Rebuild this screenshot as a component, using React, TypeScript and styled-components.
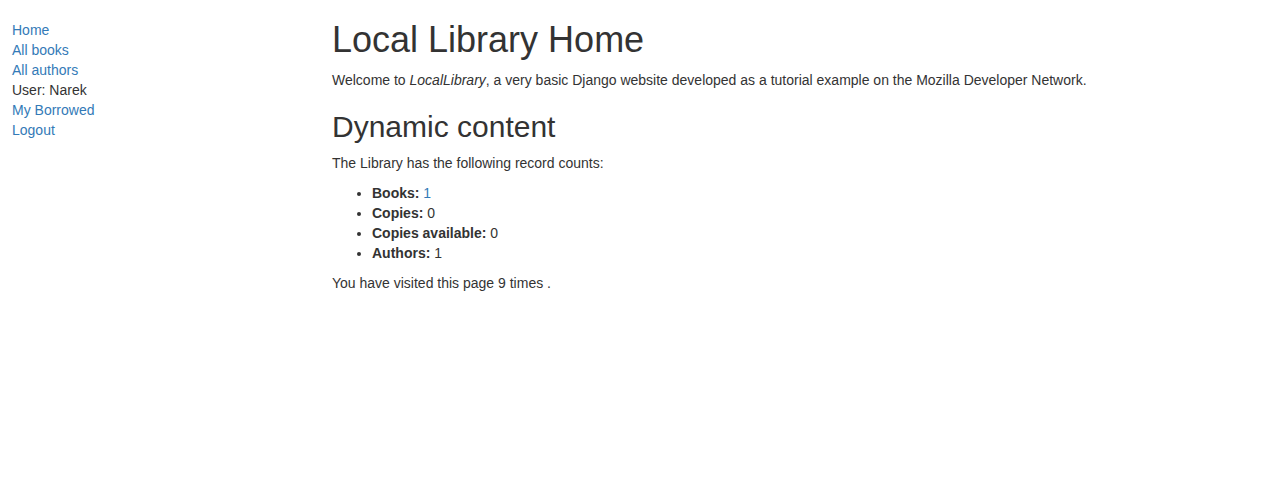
import React from 'react';
import styled, { createGlobalStyle } from 'styled-components';

const GlobalStyle = createGlobalStyle`
  html, body {
    margin: 0;
    padding: 0;
    background: #fff;
  }

  body {
    font-family: "Liberation Sans", Arial, Helvetica, sans-serif;
    font-size: 14px;
    line-height: 1.42857143;
    color: #333;
  }
`;

const Page = styled.div`
  display: grid;
  grid-template-columns: 320px 1fr;
  padding-right: 15px;
`;

const SideNav = styled.ul`
  margin: 20px 0 0;
  padding: 0 0 0 12px;
  list-style: none;
`;

const NavLink = styled.a`
  color: #337ab7;
  text-decoration: none;

  &:hover,
  &:focus {
    color: #23527c;
    text-decoration: underline;
  }
`;

const Main = styled.main`
  padding-left: 12px;
`;

const Title = styled.h1<{ $size: number }>`
  margin: 20px 0 10px;
  font-size: ${(p) => p.$size}px;
  font-weight: 500;
  line-height: 1.1;
  color: inherit;
`;

const Para = styled.p`
  margin: 0 0 10px;
`;

const Counts = styled.ul`
  margin: 0 0 10px;
  padding-left: 40px;
`;

const Value = styled.span<{ $link?: boolean }>`
  color: ${(p) => (p.$link ? '#337ab7' : 'inherit')};
`;

const navItems: { label: string; link: boolean }[] = [
  { label: 'Home', link: true },
  { label: 'All books', link: true },
  { label: 'All authors', link: true },
  { label: 'User: Narek', link: false },
  { label: 'My Borrowed', link: true },
  { label: 'Logout', link: true },
];

const counts: { label: string; value: number; link?: boolean }[] = [
  { label: 'Books:', value: 1, link: true },
  { label: 'Copies:', value: 0 },
  { label: 'Copies available:', value: 0 },
  { label: 'Authors:', value: 1 },
];

export default function App() {
  return (
    <>
      <GlobalStyle />
      <Page>
        <SideNav>
          {navItems.map((item) => (
            <li key={item.label}>
              {item.link ? <NavLink href="#">{item.label}</NavLink> : item.label}
            </li>
          ))}
        </SideNav>
        <Main>
          <Title $size={36}>Local Library Home</Title>
          <Para>
            Welcome to <em>LocalLibrary</em>, a very basic Django website developed as a tutorial
            example on the Mozilla Developer Network.
          </Para>
          <Title as="h2" $size={30}>
            Dynamic content
          </Title>
          <Para>The Library has the following record counts:</Para>
          <Counts>
            {counts.map((c) => (
              <li key={c.label}>
                <strong>{c.label}</strong> <Value $link={c.link}>{c.value}</Value>
              </li>
            ))}
          </Counts>
          <Para>You have visited this page 9 times .</Para>
        </Main>
      </Page>
    </>
  );
}
